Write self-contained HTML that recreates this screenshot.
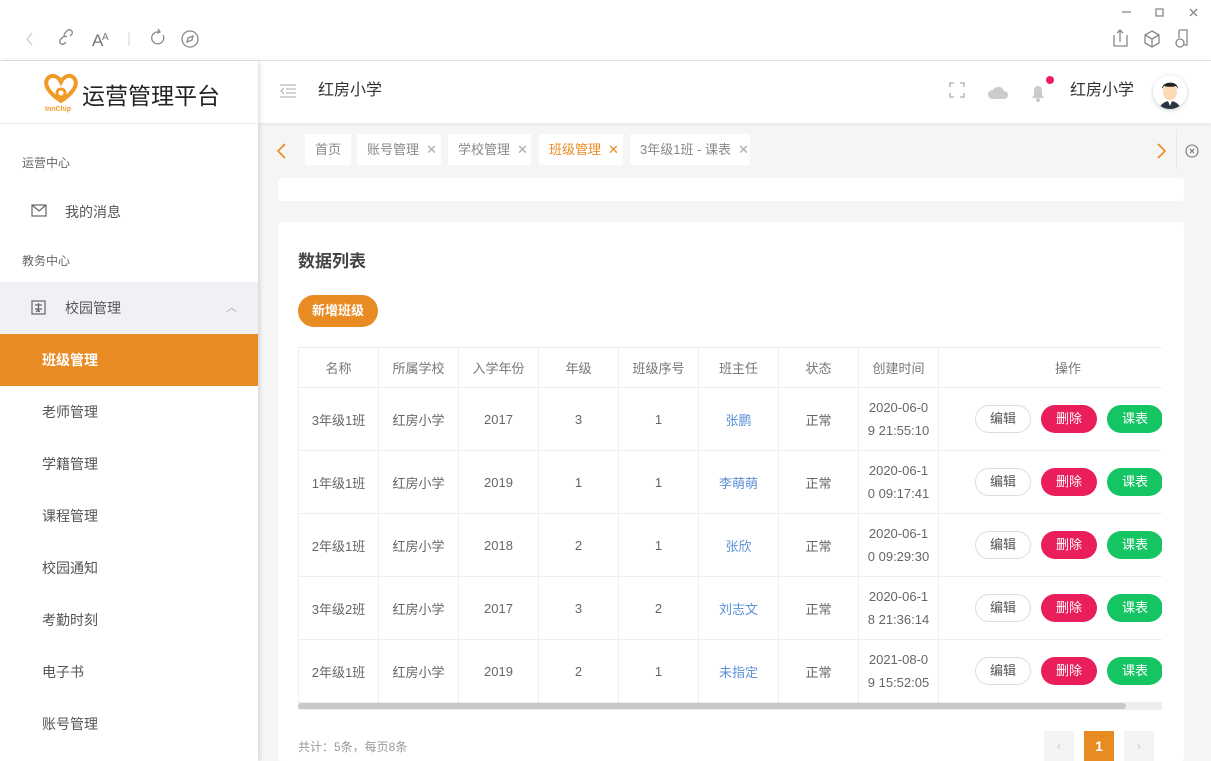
<!DOCTYPE html>
<html><head><meta charset="utf-8">
<style>
*{box-sizing:border-box;margin:0;padding:0}
html,body{width:1211px;height:761px;overflow:hidden}
body{background:#f5f5f5;font-family:"Liberation Sans","Noto Sans CJK SC",sans-serif;color:#333;position:relative}
.abs{position:absolute}
.chrome{left:0;top:0;width:1211px;height:61px;background:#fff;border-bottom:1px solid #e4e4e4}
.side{left:0;top:61px;width:258px;height:700px;background:#fff;box-shadow:2px 0 4px rgba(0,0,0,.12);z-index:2}
.logo{height:63px;border-bottom:1px solid #eee;position:relative}
.grp{font-size:12px;color:#666;position:absolute;left:22px}
.mi{position:absolute;left:0;width:258px;height:52px;line-height:52px;font-size:14px;color:#555;padding-left:42px}
.head{left:258px;top:61px;width:953px;height:62px;background:#fff;box-shadow:0 1px 4px rgba(0,0,0,.08);z-index:1}
.tab{position:absolute;top:134px;height:31px;line-height:31px;background:#fff;font-size:13px;color:#888;padding:0 0 0 10px;border-radius:2px;white-space:nowrap}
.tab .x{margin-left:7px;color:#aaa}
.card{background:#fff;border-radius:3px}
table{border-collapse:collapse;font-size:13px;color:#666;table-layout:fixed}
td,th{border:1px solid #ebeef5;text-align:center;font-weight:normal}
th{height:40px;color:#777}
td{height:63px}
.b{display:inline-block;width:56px;height:28px;line-height:28px;border-radius:14px;font-size:13px;margin-right:10px;vertical-align:middle;text-align:center}
.e{border:1px solid #ddd;color:#555;background:#fff;line-height:26px}
.d{background:#e91e5a;color:#fff}
.k{background:#15c463;color:#fff}
.lk{color:#5b8fd6}
.ops{text-align:left;padding-left:36px;white-space:nowrap}
</style></head><body>
<div class="abs chrome">
<svg class="abs" style="left:0;top:0" width="1211" height="60" fill="none" stroke="#888" stroke-width="1.3">
<path d="M32 33l-5 6 5 6" stroke="#ccc"/>
<path d="M66 42l-2 2a3 3 0 01-4-4l3-3a3 3 0 014 0M70 36l2-2a3 3 0 00-4-4l-3 3a3 3 0 000 4"/>
<text x="92" y="46" font-size="17" fill="#777" stroke="none" font-family="Liberation Sans">A</text><text x="102" y="40" font-size="10" fill="#777" stroke="none" font-family="Liberation Sans">A</text>
<path d="M129 32v14" stroke="#ddd"/>
<path d="M163 35a6 6 0 11-4-3M158 29l2 3-3 1"/>
<circle cx="190" cy="39" r="8"/><path d="M193 36l-5 2-1 4 5-2z"/>
<path d="M1122 12h9" /><rect x="1156" y="9" width="7" height="7"/><path d="M1190 9l7 7M1197 9l-7 7"/>
<path d="M1114 35v11h13V35M1120 42V30M1117 33l3-3 3 3"/>
<path d="M1152 31l7 4v8l-7 4-7-4v-8zM1145 35l7 4 7-4M1152 39v8"/>
<path d="M1179 30h8v15h-4M1179 30v8"/><circle cx="1180" cy="43" r="4"/>
</svg>
</div>
<div class="abs side">
<div class="logo">
<svg class="abs" style="left:42px;top:10px" width="38" height="42" fill="none" stroke="#f09a28" stroke-width="4"><path d="M19 30C4 20 2 12 6 7c4-4 10-2 13 4 3-6 9-8 13-4 4 5 2 13-13 23z"/><circle cx="19" cy="22" r="4" stroke-width="3"/><text x="3" y="40" font-size="7" fill="#f09a28" stroke="none" font-weight="bold">InnChip</text></svg>
<div class="abs" style="left:82px;top:16px;font-size:23px;color:#222">运营管理平台</div>
</div>
<div class="grp" style="top:93px">运营中心</div>
<svg class="abs" style="left:31px;top:143px" width="16" height="13" fill="none" stroke="#666" stroke-width="1.2"><rect x="1" y="1" width="14" height="11"/><path d="M1 1l7 6 7-6"/></svg>
<div class="abs" style="left:65px;top:141px;font-size:14px;color:#555">我的消息</div>
<div class="grp" style="top:191px">教务中心</div>
<div class="mi" style="top:221px;background:#f0f1f5;padding-left:65px">校园管理<span class="abs" style="left:226px;color:#aaa;font-size:11px">︿</span></div>
<svg class="abs" style="left:31px;top:239px" width="15" height="15" fill="none" stroke="#666" stroke-width="1.2"><rect x="1" y="1" width="13" height="13"/><path d="M4 5h7M4 9h7M7.5 3v9M5 12l2-2 2 2"/></svg>
<div class="mi" style="top:273px;background:#e98b23;color:#fff;font-weight:bold">班级管理</div>
<div class="mi" style="top:325px">老师管理</div>
<div class="mi" style="top:377px">学籍管理</div>
<div class="mi" style="top:429px">课程管理</div>
<div class="mi" style="top:481px">校园通知</div>
<div class="mi" style="top:533px">考勤时刻</div>
<div class="mi" style="top:585px">电子书</div>
<div class="mi" style="top:637px">账号管理</div>
</div>
<div class="abs head">
<svg class="abs" style="left:21px;top:22px" width="18" height="16" stroke="#bbb" stroke-width="1.3" fill="none"><path d="M1 2h16M7 6h10M7 10h10M1 14h16M5 5l-3 3 3 3"/></svg>
<div class="abs" style="left:60px;top:20px;font-size:16px;color:#333;line-height:20px">红房小学</div>
<svg class="abs" style="left:690px;top:20px" width="110" height="24" fill="none" stroke="#bbb" stroke-width="1.6"><path d="M2 6V2h4M12 2h4v4M16 12v4h-4M6 16H2v-4"/>
<path d="M44 18h12a4 4 0 000-8 6 6 0 00-11-1 4 4 0 00-1 9z" fill="#ccc" stroke="none"/>
<path d="M84 17h12l-2-3v-5a4 4 0 00-8 0v5z" fill="#ccc" stroke="none"/><circle cx="90" cy="19" r="2" fill="#ccc" stroke="none"/></svg>
<div class="abs" style="left:788px;top:15px;width:8px;height:8px;border-radius:4px;background:#ee1f5c"></div>
<div class="abs" style="left:812px;top:20px;font-size:16px;color:#333;line-height:20px">红房小学</div>
<div class="abs" style="left:895px;top:14px;width:34px;height:34px;border-radius:17px;background:#fff;box-shadow:0 1px 4px rgba(0,0,0,.2);overflow:hidden">
<svg width="34" height="34"><ellipse cx="17" cy="17" rx="7" ry="8" fill="#fbd9b5"/><path d="M9 14c0-8 16-9 16 0l-2-3c-3 1-8 1-12 0z" fill="#222"/><path d="M6 34c2-6 7-8 11-8s9 2 11 8z" fill="#2b3340"/><path d="M15 26l2 5 2-5z" fill="#fff"/></svg></div>
</div>
<svg class="abs" style="left:274px;top:142px" width="14" height="18" fill="none" stroke="#e98b23" stroke-width="1.6"><path d="M11 2L4 9l7 7"/></svg>
<div class="tab" style="left:305px;width:46px">首页</div>
<div class="tab" style="left:357px;width:84px">账号管理<span class="x">✕</span></div>
<div class="tab" style="left:448px;width:83px">学校管理<span class="x">✕</span></div>
<div class="tab" style="left:539px;width:84px;color:#e98b23">班级管理<span class="x" style="color:#e98b23">✕</span></div>
<div class="tab" style="left:630px;width:120px">3年级1班 - 课表<span class="x">✕</span></div>
<svg class="abs" style="left:1155px;top:142px" width="14" height="18" fill="none" stroke="#e98b23" stroke-width="1.6"><path d="M3 2l7 7-7 7"/></svg>
<div class="abs" style="left:1176px;top:130px;width:1px;height:40px;background:#e8e8e8"></div>
<svg class="abs" style="left:1185px;top:144px" width="14" height="14" fill="none" stroke="#777" stroke-width="1.1"><circle cx="7" cy="7" r="6"/><path d="M5 5l4 4M9 5l-4 4"/></svg>
<div class="abs card" style="left:278px;top:178px;width:906px;height:23px"></div>
<div class="abs card" style="left:278px;top:222px;width:906px;height:539px">
<div class="abs" style="left:20px;top:25px;font-size:17px;color:#444;font-weight:bold">数据列表</div>
<div class="abs" style="left:20px;top:73px;width:80px;height:32px;line-height:32px;border-radius:16px;background:#e98b23;color:#fff;font-size:13px;text-align:center;font-weight:bold">新增班级</div>
<div class="abs" style="left:20px;top:125px;width:864px;height:363px;overflow:hidden">
<table style="width:900px">
<colgroup><col width="80"><col width="80"><col width="80"><col width="80"><col width="80"><col width="80"><col width="80"><col width="80"><col width="260"></colgroup>
<tr><th>名称</th><th>所属学校</th><th>入学年份</th><th>年级</th><th>班级序号</th><th>班主任</th><th>状态</th><th>创建时间</th><th style="text-align:left;padding-left:116px">操作</th></tr>
<tr><td>3年级1班</td><td>红房小学</td><td>2017</td><td>3</td><td>1</td><td class="lk">张鹏</td><td>正常</td><td style="line-height:23px">2020-06-0<br>9 21:55:10</td><td class="ops"><span class="b e">编辑</span><span class="b d">删除</span><span class="b k">课表</span></td></tr>
<tr><td>1年级1班</td><td>红房小学</td><td>2019</td><td>1</td><td>1</td><td class="lk">李萌萌</td><td>正常</td><td style="line-height:23px">2020-06-1<br>0 09:17:41</td><td class="ops"><span class="b e">编辑</span><span class="b d">删除</span><span class="b k">课表</span></td></tr>
<tr><td>2年级1班</td><td>红房小学</td><td>2018</td><td>2</td><td>1</td><td class="lk">张欣</td><td>正常</td><td style="line-height:23px">2020-06-1<br>0 09:29:30</td><td class="ops"><span class="b e">编辑</span><span class="b d">删除</span><span class="b k">课表</span></td></tr>
<tr><td>3年级2班</td><td>红房小学</td><td>2017</td><td>3</td><td>2</td><td class="lk">刘志文</td><td>正常</td><td style="line-height:23px">2020-06-1<br>8 21:36:14</td><td class="ops"><span class="b e">编辑</span><span class="b d">删除</span><span class="b k">课表</span></td></tr>
<tr><td>2年级1班</td><td>红房小学</td><td>2019</td><td>2</td><td>1</td><td class="lk">未指定</td><td>正常</td><td style="line-height:23px">2021-08-0<br>9 15:52:05</td><td class="ops"><span class="b e">编辑</span><span class="b d">删除</span><span class="b k">课表</span></td></tr>
</table>
<div class="abs" style="left:0;top:355px;width:864px;height:8px;background:#eee"><div style="width:828px;height:6px;margin-top:1px;background:#c8c8c8;border-radius:3px"></div></div>
</div>
<div class="abs" style="left:20px;top:516px;font-size:12px;color:#999">共计：5条，每页8条</div>
<div class="abs" style="left:766px;top:509px;width:30px;height:30px;background:#f4f4f5;color:#ccc;text-align:center;line-height:30px;font-size:12px">‹</div>
<div class="abs" style="left:806px;top:509px;width:30px;height:30px;background:#e98b23;color:#fff;text-align:center;line-height:30px;font-size:14px;font-weight:bold">1</div>
<div class="abs" style="left:846px;top:509px;width:30px;height:30px;background:#f4f4f5;color:#ccc;text-align:center;line-height:30px;font-size:12px">›</div>
</div>
</body></html>
